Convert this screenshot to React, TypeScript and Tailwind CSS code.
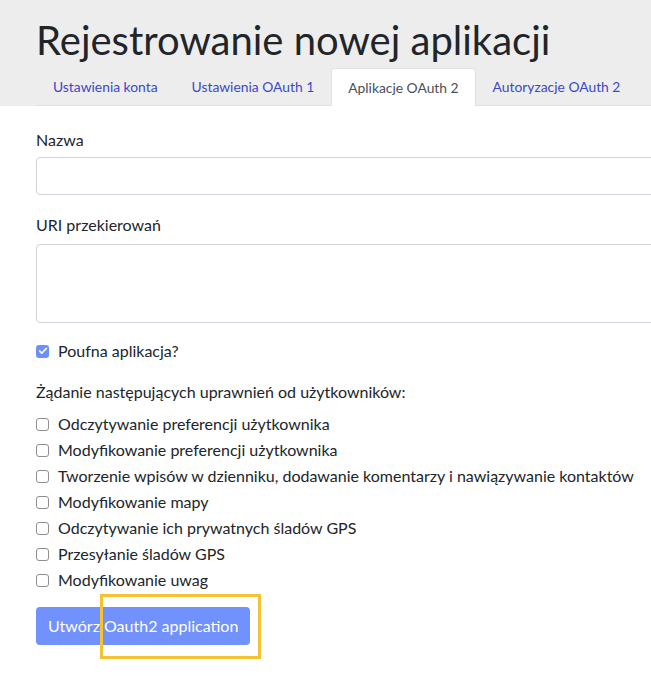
import { Check } from 'lucide-react';

const tabs = [
  { label: 'Ustawienia konta', active: false },
  { label: 'Ustawienia OAuth 1', active: false },
  { label: 'Aplikacje OAuth 2', active: true },
  { label: 'Autoryzacje OAuth 2', active: false },
];

const scopes = [
  'Odczytywanie preferencji użytkownika',
  'Modyfikowanie preferencji użytkownika',
  'Tworzenie wpisów w dzienniku, dodawanie komentarzy i nawiązywanie kontaktów',
  'Modyfikowanie mapy',
  'Odczytywanie ich prywatnych śladów GPS',
  'Przesyłanie śladów GPS',
  'Modyfikowanie uwag',
];

function Box({ checked }: { checked?: boolean }) {
  if (checked) {
    return (
      <span className="flex h-[13px] w-[13px] shrink-0 items-center justify-center rounded-[3px] bg-[#6d8ff8]">
        <Check className="h-[10px] w-[10px] text-white" strokeWidth={4} />
      </span>
    );
  }
  return (
    <span className="h-[13px] w-[13px] shrink-0 rounded-[3px] border border-[#8f8f8f] bg-white" />
  );
}

export default function App() {
  return (
    <div
      className="relative w-[651px] overflow-hidden bg-white text-[#212529]"
      style={{ fontFamily: 'Lato, "Noto Sans", sans-serif' }}
    >
      <header className="bg-[#ededed] pt-4">
        <h1 className="pl-[36px] text-[40px] leading-[48px] font-normal">
          Rejestrowanie nowej aplikacji
        </h1>
        <nav className="mt-1 ml-[36px] flex border-b border-[#dee2e6]">
          {tabs.map((t) => (
            <a
              key={t.label}
              className={
                t.active
                  ? '-mb-px flex h-[38px] items-center rounded-t-[4px] border border-b-0 border-[#dee2e6] bg-white px-4 pt-[2px] text-[13.85px] text-[#495057]'
                  : 'flex h-[37px] items-center border border-transparent px-4 pt-[2px] text-[13.85px] text-[#3c49c6]'
              }
            >
              {t.label}
            </a>
          ))}
        </nav>
      </header>

      <form className="w-[700px] pl-[36px] pb-[34px] text-[16px]">
        <label className="mt-[22px] block leading-6">Nazwa</label>
        <input className="mt-[5px] block h-[38px] w-full rounded-[4px] border border-[#ced4da] bg-white" />

        <label className="mt-[18px] block leading-6">URI przekierowań</label>
        <textarea className="mt-[7px] block h-[79px] w-full resize-none rounded-[4px] border border-[#ced4da] bg-white" />

        <div className="mt-4 flex items-center gap-[9px] leading-6">
          <Box checked />
          <span>Poufna aplikacja?</span>
        </div>

        <p className="mt-[17px] leading-6">Żądanie następujących uprawnień od użytkowników:</p>

        <ul className="mt-[7px]">
          {scopes.map((s) => (
            <li key={s} className="flex h-[26px] items-center gap-[9px]">
              <Box />
              <span className="whitespace-nowrap">{s}</span>
            </li>
          ))}
        </ul>

        <button
          type="button"
          className="mt-[14px] h-[38px] rounded-[4px] bg-[#7191fd] px-3 text-[16px] text-white"
        >
          Utwórz Oauth2 application
        </button>
      </form>

      <div className="absolute top-[594px] left-[100px] h-[65px] w-[161px] border-[3px] border-[#f4c232]" />
    </div>
  );
}
